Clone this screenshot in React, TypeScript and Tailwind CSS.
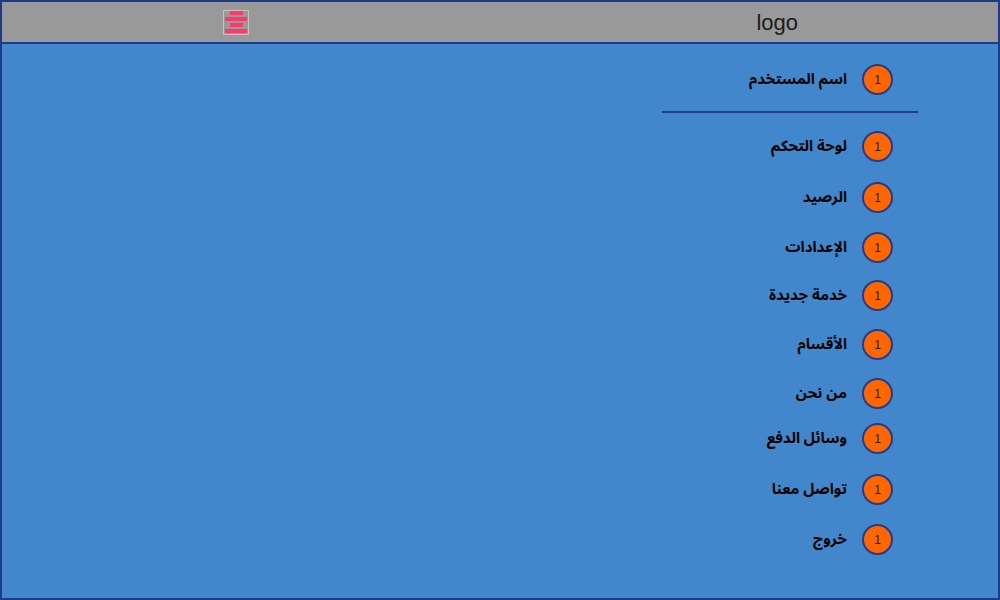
import React from 'react';

const menuItems = [
  { label: 'لوحة التحكم', gap: 'mt-[18px]' },
  { label: 'الرصيد', gap: 'mt-[20px]' },
  { label: 'الإعدادات', gap: 'mt-[19px]' },
  { label: 'خدمة جديدة', gap: 'mt-[17px]' },
  { label: 'الأقسام', gap: 'mt-[18px]' },
  { label: 'من نحن', gap: 'mt-[18px]' },
  { label: 'وسائل الدفع', gap: 'mt-[14px]' },
  { label: 'تواصل معنا', gap: 'mt-[20px]' },
  { label: 'خروج', gap: 'mt-[19px]' },
];

const Badge = () => (
  <span className="flex h-[31px] w-[31px] shrink-0 items-center justify-center rounded-full border-2 border-[#253c8c] bg-[#ff6600] text-[12px] text-[#1a1a1a]">
    1
  </span>
);

const MenuRow = ({ label, className = '' }: { label: string; className?: string }) => (
  <div dir="rtl" className={`flex items-center gap-[15px] pr-[25px] ${className}`}>
    <Badge />
    <span
      className="text-[15px] font-bold leading-none text-black"
      style={{ fontFamily: '"Noto Sans Arabic", "DejaVu Sans", sans-serif' }}
    >
      {label}
    </span>
  </div>
);

const App = () => {
  return (
    <div
      className="flex h-[600px] w-[1000px] flex-col border-2 border-[#1e3a8a] bg-[#4287cb]"
      style={{ fontFamily: '"Liberation Sans", "Noto Sans Arabic", sans-serif' }}
    >
      {/* Header */}
      <header className="flex h-[42px] shrink-0 items-center justify-between border-b-2 border-[#1e3a8a] bg-[#999999]">
        <button className="ml-[221px] flex h-[25px] w-[26px] flex-col items-center justify-center gap-[2px] border border-[#c4c4c4]">
          <span className="h-[4px] w-[13px] bg-[#fb3a6c]" />
          <span className="h-[4px] w-[22px] bg-[#fb3a6c]" />
          <span className="h-[4px] w-[13px] bg-[#fb3a6c]" />
          <span className="h-[4px] w-[22px] bg-[#fb3a6c]" />
        </button>
        <span className="mr-[200px] text-[22px] text-[#1c1c1c]">logo</span>
      </header>

      {/* Sidebar menu */}
      <div className="flex flex-1 justify-end pr-[80px]">
        <nav className="flex w-[256px] flex-col pt-[20px]">
          <MenuRow label="اسم المستخدم" />
          <div className="mt-[16px] h-[2px] w-full bg-[#253c8c]" />
          {menuItems.map((item) => (
            <MenuRow key={item.label} label={item.label} className={item.gap} />
          ))}
        </nav>
      </div>
    </div>
  );
};

export default App;
